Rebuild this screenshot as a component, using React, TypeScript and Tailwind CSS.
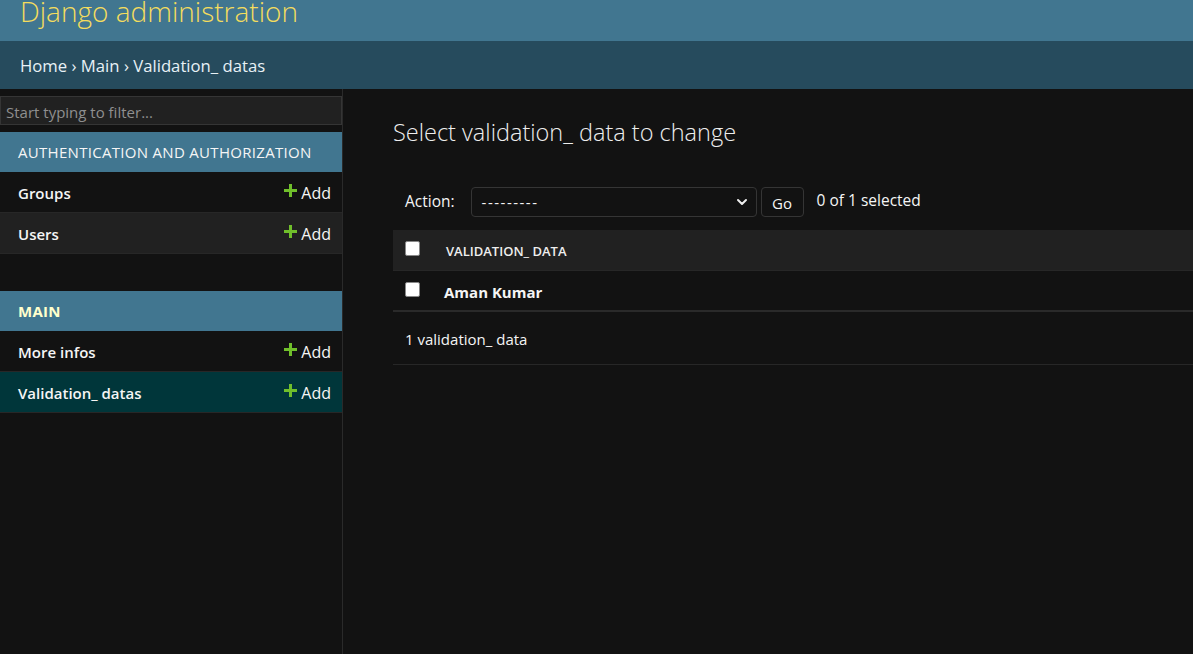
import { ChevronDown } from 'lucide-react';

const font = { fontFamily: '"Open Sans", "Noto Sans", sans-serif' };

function AddLink() {
  return (
    <span className="flex items-center gap-[4px] text-[16px] text-[#f5f5f5] font-normal">
      <svg width="13" height="13" viewBox="0 0 13 13" className="-mt-[6px]">
        <path d="M5 0h3v5h5v3H8v5H5V8H0V5h5z" fill="#70bf2b" />
      </svg>
      Add
    </span>
  );
}

function ModelRow({ name, bg = 'bg-[#121212]' }: { name: string; bg?: string }) {
  return (
    <div className={`flex h-[41px] items-center justify-between border-b border-[#272727] pl-[18px] pr-[11px] pt-[2px] ${bg}`}>
      <span className="text-[15px] font-semibold text-[#f5f5f5]">{name}</span>
      <AddLink />
    </div>
  );
}

export default function App() {
  return (
    <div className="flex h-[654px] flex-col overflow-hidden bg-[#121212]" style={font}>
      <div className="h-[41px] shrink-0 overflow-hidden bg-[#417690] pl-[20px]">
        <div className="-mt-[9px] text-[28px] font-light leading-[40px] text-[#f5dd5d]">Django administration</div>
      </div>
      <div className="flex h-[48px] shrink-0 items-center bg-[#264b5d] pl-[20px] pt-[2px] text-[16.7px] text-[#e8f1f6]">
        Home › Main › Validation_ datas
      </div>
      <div className="flex flex-1">
        <aside className="w-[343px] shrink-0 border-r border-[#2a2a2a] pt-[7px]">
          <div className="mb-[7px] h-[29px] border border-[#353535] bg-[#212121] pl-[5px] pt-[2px] text-[15px] leading-[27px] text-[#8f8f8f]">
            Start typing to filter...
          </div>
          <div className="flex h-[40px] items-center bg-[#417690] pl-[18px] text-[15px] tracking-[0.3px] text-[#f5f5f5]">
            AUTHENTICATION AND AUTHORIZATION
          </div>
          <ModelRow name="Groups" />
          <ModelRow name="Users" bg="bg-[#212121]" />
          <div className="h-[37px]" />
          <div className="flex h-[40px] items-center bg-[#417690] pl-[18px] text-[15px] font-bold tracking-[0.3px] text-[#ffffcc]">
            MAIN
          </div>
          <ModelRow name="More infos" />
          <ModelRow name="Validation_ datas" bg="bg-[#00363a]" />
        </aside>
        <main className="flex-1 pl-[50px] pt-[27px]">
          <h1 className="text-[23.5px] font-light leading-[32px] text-[#eeeeee]">Select validation_ data to change</h1>
          <div className="mt-[39px] flex h-[30px] items-center pl-[12px] text-[15px] text-[#f5f5f5]">
            <span className="text-[15.5px]">Action:</span>
            <div className="ml-[16px] flex h-[30px] w-[286px] items-center justify-between rounded-[4px] border border-[#353535] bg-[#121212] pl-[10px] pr-[6px]">
              <span className="tracking-[1.5px]">---------</span>
              <ChevronDown size={16} strokeWidth={3} className="text-[#eeeeee]" />
            </div>
            <div className="ml-[4px] flex h-[30px] w-[43px] items-center justify-center rounded-[4px] border border-[#353535] pt-[2px]">Go</div>
            <span className="ml-[13px] -mt-[2px] text-[15.5px]">0 of 1 selected</span>
          </div>
          <div className="mt-[13px]">
            <div className="flex h-[41px] items-start border-b border-[#272727] bg-[#212121] pl-[12px] pt-[11px]">
              <span className="h-[15px] w-[15px] rounded-[2px] border border-[#888] bg-white" />
              <span className="ml-[26px] mt-[1px] text-[13px] font-semibold text-[#eeeeee]">VALIDATION_ DATA</span>
            </div>
            <div className="flex h-[41px] items-start border-b-2 border-[#2a2a2a] pl-[12px] pt-[11px]">
              <span className="h-[15px] w-[15px] rounded-[2px] border border-[#888] bg-white" />
              <span className="ml-[24px] -mt-[1px] text-[15px] font-bold text-[#f5f5f5]">Aman Kumar</span>
            </div>
            <div className="flex h-[53px] items-center border-b border-[#272727] pl-[12px] pt-[2px] text-[15px] text-[#f5f5f5]">
              1 validation_ data
            </div>
          </div>
        </main>
      </div>
    </div>
  );
}
